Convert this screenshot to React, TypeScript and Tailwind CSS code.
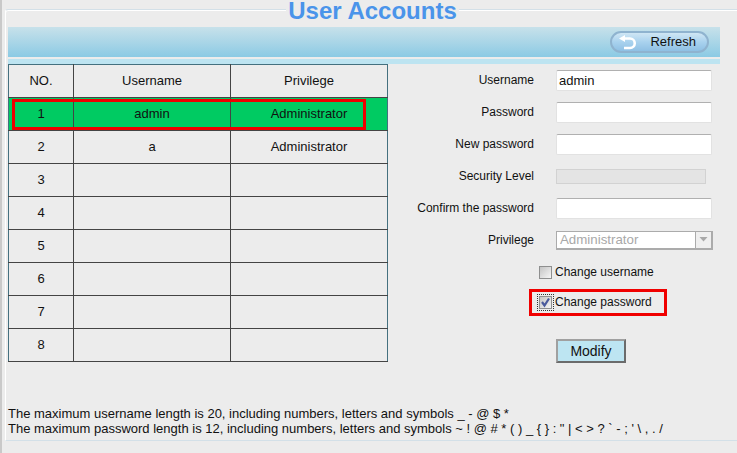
const rows = [
  { no: "1", username: "admin", privilege: "Administrator" },
  { no: "2", username: "a", privilege: "Administrator" },
  { no: "3", username: "", privilege: "" },
  { no: "4", username: "", privilege: "" },
  { no: "5", username: "", privilege: "" },
  { no: "6", username: "", privilege: "" },
  { no: "7", username: "", privilege: "" },
  { no: "8", username: "", privilege: "" },
];

function FormRow({ label, children }: { label: string; children: React.ReactNode }) {
  return (
    <div className="flex h-[32px] items-center">
      <label className="w-[146px] text-right text-[12px]">{label}</label>
      <div className="ml-[22px] flex items-center">{children}</div>
    </div>
  );
}

function TextBox({ value }: { value?: string }) {
  return (
    <div className="h-[21px] w-[156px] rounded-[2px] border border-[#e2e2e2] border-t-[#b0b0b0] bg-white pl-[2px] text-[13px] leading-[19px] text-[#111]">
      {value}
    </div>
  );
}

function CheckBox({ checked }: { checked?: boolean }) {
  return (
    <div className="flex h-[13px] w-[13px] items-center justify-center border border-[#8e8f8f] bg-gradient-to-br from-[#c4c4c4] to-[#f6f6f6]">
      {checked && (
        <svg width="11" height="11" viewBox="0 0 11 11">
          <path d="M2 5 L4.5 8.5 L9 1.5" fill="none" stroke="#4a5a9c" strokeWidth="2.2" />
        </svg>
      )}
    </div>
  );
}

export default function App() {
  return (
    <div className="relative flex h-[453px] w-[737px] overflow-hidden bg-[#ececec] font-['Liberation_Sans',Arial,sans-serif] text-[13px] text-[#111]">
      <div className="h-full w-[2px] shrink-0 bg-[#c9c9c9]" />

      {/* Panel with title sitting on the border */}
      <div className="ml-[3px] mt-[9px] h-[432px] w-[732px] rounded-tl-[3px] border-l border-t border-b border-l-white border-t-[#d3e0e8] border-b-[#d3e0e8] shadow-[inset_0_1px_0_#fff]">
        <div className="-mt-[10px] flex justify-center pl-[2px]">
          <h1 className="bg-[#ececec] px-[2px] text-[24px] font-bold leading-[21px] text-[#4a94ea]">User Accounts</h1>
        </div>

        <div className="ml-[2px] mt-[6px] w-[712px]">
          <div className="flex h-[30px] items-center justify-end bg-gradient-to-b from-[#c7e1ea] to-[#8bcae4] pr-[11px]">
            <button className="relative flex h-[22px] w-[99px] items-center justify-end rounded-full border-2 border-[#8fb3cf] bg-gradient-to-b from-[#cfe6f4] via-[#a9d2ee] to-[#8fc0e4] pr-[11px] text-[#111]">
              <svg className="absolute left-[6px] top-[2px]" width="20" height="15" viewBox="0 0 20 15">
                <path d="M7 3.5 H12 A4.5 4.5 0 0 1 12 13 H6" fill="none" stroke="#fff" strokeWidth="2.6" />
                <path d="M1 3.5 L7 0 V7 Z" fill="#fff" />
              </svg>
              Refresh
            </button>
          </div>
          <div className="mt-[2px] h-[5px] bg-[#bde4f1]" />
        </div>

        <div className="ml-[2px] flex">
          {/* User table */}
          <div className="relative h-[298px] w-[380px] shrink-0">
            <table className="w-full table-fixed border-collapse border border-[#44707f]">
              <thead>
                <tr className="h-[33px]">
                  <th className="w-[65px] border border-[#444] border-t-[#44707f] border-l-[#44707f] font-normal">NO.</th>
                  <th className="w-[157px] border border-[#444] border-t-[#44707f] font-normal">Username</th>
                  <th className="border border-[#444] border-t-[#44707f] border-r-[#44707f] font-normal">Privilege</th>
                </tr>
              </thead>
              <tbody>
                {rows.map((row, i) => (
                  <tr key={row.no} className={i === 0 ? "h-[33px] bg-[#00cb62]" : "h-[33px]"}>
                    <td className="border border-[#444] border-l-[#44707f] text-center">{row.no}</td>
                    <td className="border border-[#444] text-center">{row.username}</td>
                    <td className="border border-[#444] border-r-[#44707f] text-center">{row.privilege}</td>
                  </tr>
                ))}
              </tbody>
            </table>
            <div className="absolute left-[4px] top-[35px] h-[31px] w-[354px] border-[3px] border-[#f00000]" />
          </div>

          {/* Edit form */}
          <div className="flex-1">
            <FormRow label="Username"><TextBox value="admin" /></FormRow>
            <FormRow label="Password"><TextBox /></FormRow>
            <FormRow label="New password"><TextBox /></FormRow>
            <FormRow label="Security Level">
              <div className="h-[15px] w-[150px] border border-[#d2d2d2] bg-[#e4e4e4]" />
            </FormRow>
            <FormRow label="Confirm the password"><TextBox /></FormRow>
            <FormRow label="Privilege">
              <div className="flex h-[19px] w-[157px] items-center border border-r-2 border-b-2 border-[#ababab] bg-white pl-[3px] text-[13.3px] text-[#a8a8a8]">
                <span className="flex-1">Administrator</span>
                <div className="flex h-full w-[16px] items-center justify-center border-l border-[#ababab] bg-[#efefef]">
                  <svg width="9" height="5" viewBox="0 0 9 5"><path d="M0.5 0 H8.5 L4.5 4.5 Z" fill="#a8a8a8" /></svg>
                </div>
              </div>
            </FormRow>

            <div className="ml-[151px] flex h-[32px] items-center gap-[3px] text-[12px]">
              <CheckBox />
              <span>Change username</span>
            </div>
            <div className="relative ml-[151px] flex h-[28px] items-center gap-[3px] text-[12px]">
              <div className="outline-dotted outline-1 outline-[#333] outline-offset-[1px]"><CheckBox checked /></div>
              <span>Change password</span>
              <div className="absolute left-[-10px] top-[1px] h-[27px] w-[138px] border-[3px] border-[#f00000]" />
            </div>

            <button className="ml-[168px] mt-[23px] h-[24px] w-[70px] border-2 border-[#6b6b6b] border-l-[#a0a0a0] border-t-[#a0a0a0] bg-[#bde5f2] text-[14px] text-[#111]">
              Modify
            </button>
          </div>
        </div>

        <div className="ml-[2px] mt-[43px] leading-[15px]">
          <p>The maximum username length is 20, including numbers, letters and symbols _ - @ $ *</p>
          <p>The maximum password length is 12, including numbers, letters and symbols ~ ! @ # * ( ) _ {"{ }"} : " | &lt; &gt; ? ` - ; ' \ , . /</p>
        </div>
      </div>
    </div>
  );
}
